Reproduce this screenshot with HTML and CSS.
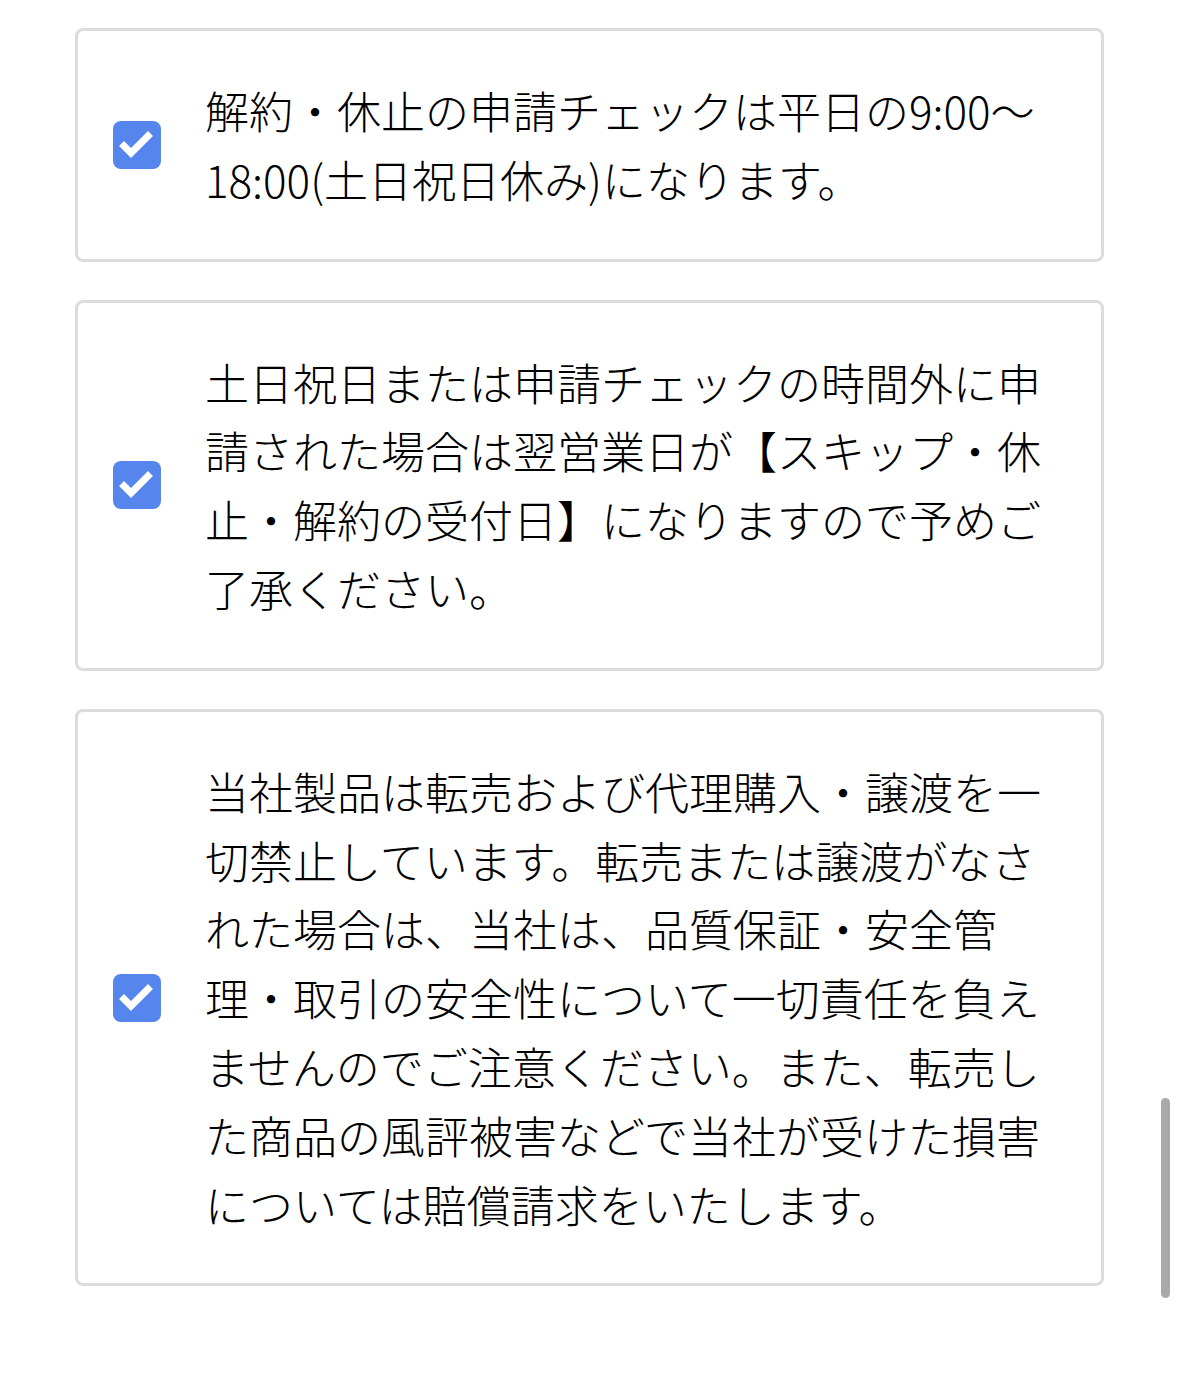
FILE: index.html
```html
<!DOCTYPE html>
<html lang="ja">
 <head>
  <meta charset="utf-8">
  <title>ご注意事項</title>
  <link rel="stylesheet" href="styles.css">
 </head>
 <body>
  <div class="notes">
   <label class="note">
    <span class="check"><svg viewBox="0 0 48 48" width="48" height="48"><path d="M11 25 L18 32 L35 15" fill="none" stroke="#fff" stroke-width="7" stroke-linecap="square" stroke-linejoin="miter"/></svg></span>
    <span class="note-text">解約・休止の申請チェックは平日の9:00〜18:00(土日祝日休み)になります。</span>
   </label>
   <label class="note">
    <span class="check"><svg viewBox="0 0 48 48" width="48" height="48"><path d="M11 25 L18 32 L35 15" fill="none" stroke="#fff" stroke-width="7" stroke-linecap="square" stroke-linejoin="miter"/></svg></span>
    <span class="note-text">土日祝日または申請チェックの時間外に申請された場合は翌営業日が【スキップ・休止・解約の受付日】になりますので予めご了承ください。</span>
   </label>
   <label class="note">
    <span class="check"><svg viewBox="0 0 48 48" width="48" height="48"><path d="M11 25 L18 32 L35 15" fill="none" stroke="#fff" stroke-width="7" stroke-linecap="square" stroke-linejoin="miter"/></svg></span>
    <span class="note-text">当社製品は転売および代理購入・譲渡を一切禁止しています。転売または譲渡がなされた場合は、当社は、品質保証・安全管理・取引の安全性について一切責任を負えませんのでご注意ください。また、転売した商品の風評被害などで当社が受けた損害については賠償請求をいたします。</span>
   </label>
  </div>
  <div class="scrollbar"></div>
 </body>
</html>
```

FILE: styles.css
```css
body {
    margin: 0;
    background: #fff;
    font-family: "Noto Sans CJK JP", "Noto Sans", sans-serif;
    color: #000;
}

.notes {
    display: flex;
    flex-direction: column;
    gap: 38px;
    padding: 28px 75px 0;
}

.note {
    display: flex;
    align-items: center;
    gap: 44px;
    padding: 45px 44px 45px 35px;
    border: 3px solid #dcdcdc;
    border-radius: 8px;
}

.check {
    flex: 0 0 48px;
    width: 48px;
    height: 48px;
    border-radius: 8px;
    background: #5685ee;
    display: flex;
}

.note-text {
    flex: 1;
    font-size: 44px;
    font-weight: 300;
    line-height: 68.8px;
    line-break: strict;
}

.scrollbar {
    position: fixed;
    left: 1161px;
    top: 1098px;
    width: 9px;
    height: 200px;
    border-radius: 5px;
    background: #a9a9a9;
}
```
